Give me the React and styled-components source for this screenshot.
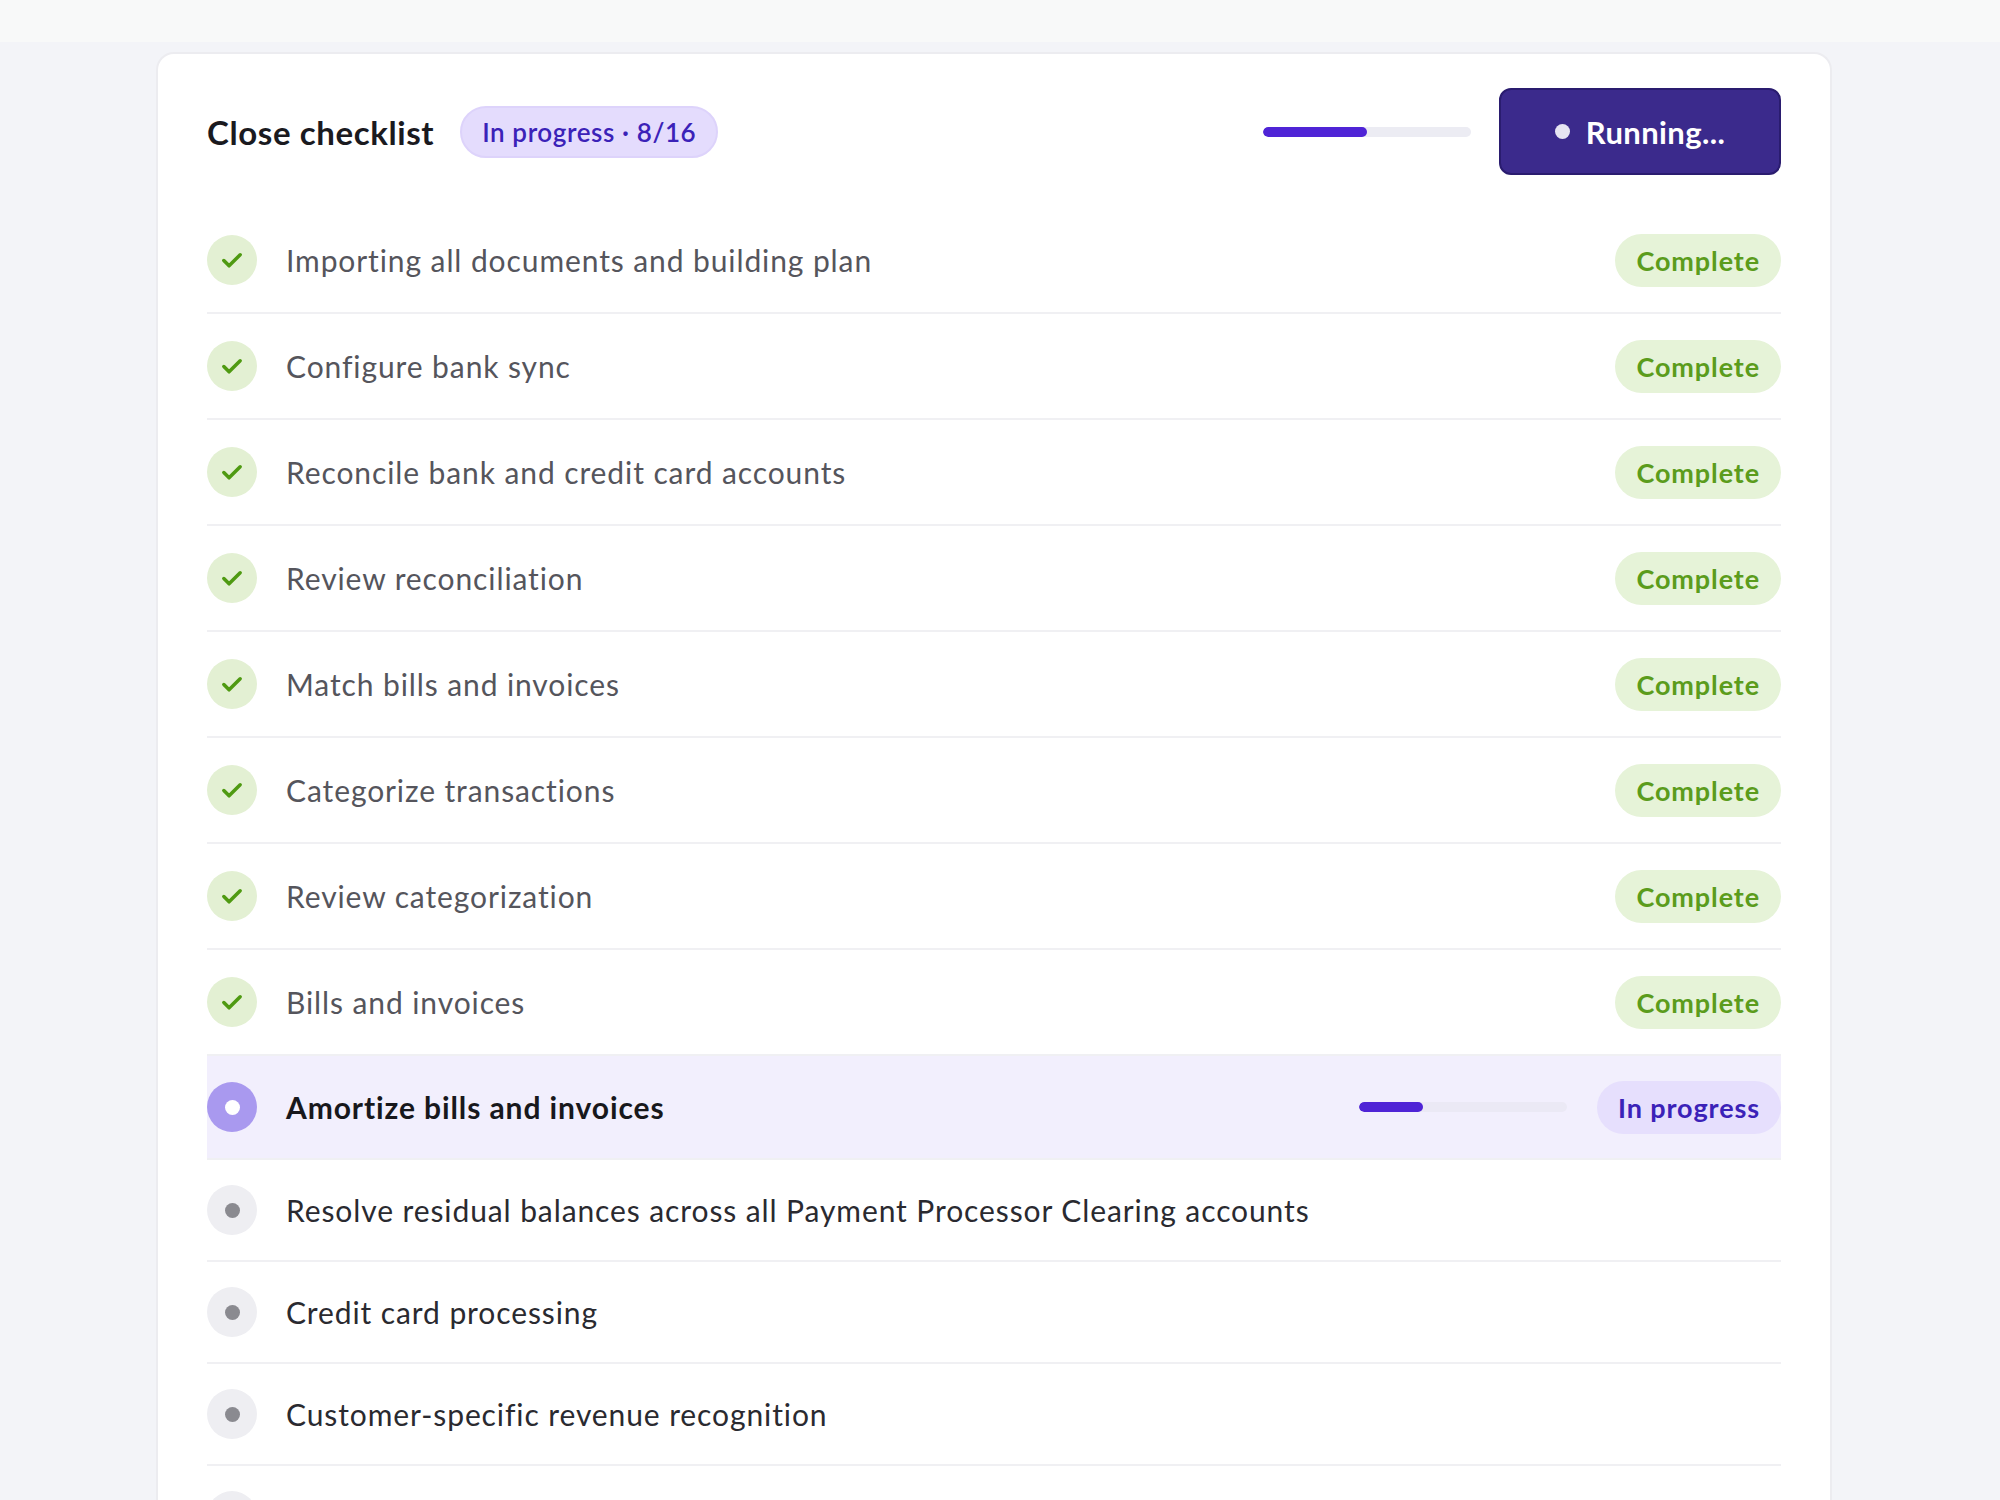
import React from "react";
import styled, { createGlobalStyle } from "styled-components";

const Global = createGlobalStyle`
  *, *::before, *::after { box-sizing: border-box; }
  html, body { margin: 0; padding: 0; background: #f3f4f8; font-family: Lato, "Noto Sans", sans-serif; }
`;

const TopBar = styled.div`height: 42px; background: #f8f9f9;`;
const Page = styled.div`padding: 10px 168px 0 156px;`;
const Card = styled.div`
  background: #fff; border: 2px solid #ececf0; border-bottom: none;
  border-radius: 18px 18px 0 0; padding: 34px 49px 0 49px; min-height: 1500px;
`;
const Header = styled.div`display: flex; align-items: center; margin-bottom: 33px;`;
const Title = styled.h1`margin: 0; font-size: 33px; font-weight: 700; color: #1a1a1f; letter-spacing: 0.6px;`;
const Badge = styled.span`
  margin-left: 26px; height: 52px; padding: 0 20px; border-radius: 26px; display: inline-flex; align-items: center;
  background: #e4dcfd; color: #3b22b8; font-size: 26px; font-weight: 600; border: 2px solid #ddd3fb; letter-spacing: 0.6px;
`;
const Spacer = styled.div`flex: 1;`;
const Track = styled.div`
  width: ${p => p.$w}px; height: 10px; border-radius: 5px; background: ${p => p.$bg || "#ececf3"}; overflow: hidden; display: flex;
`;
const Fill = styled.div`height: 100%; background: #4f24d6; border-radius: 5px;`;
const Button = styled.button`
  margin-left: 28px; width: 282px; height: 87px; border-radius: 12px; border: 2px solid #2a1c6f;
  background: #3b2a8c; color: #fff; font-family: inherit; font-size: 31px; font-weight: 700; letter-spacing: 0.4px;
  display: flex; align-items: center; justify-content: center; gap: 16px;
`;
const Dot = styled.span`width: 15px; height: 15px; border-radius: 50%; background: ${p => p.$c};`;

const Row = styled.div`
  display: flex; align-items: center; height: ${p => p.$h}px; border-bottom: 2px solid #f0f0f3;
  background: ${p => (p.$active ? "#f2effd" : "transparent")};
`;
const Icon = styled.div`
  width: 50px; height: 50px; border-radius: 50%; flex: none; display: flex; align-items: center; justify-content: center;
  background: ${p => p.$bg};
`;
const Label = styled.div`
  margin-left: 29px; font-size: 30px; color: ${p => (p.$active ? "#18181c" : p.$pending ? "#2a2a30" : "#55555c")};
  font-weight: ${p => (p.$active ? 700 : 400)}; flex: 1; letter-spacing: 0.9px; white-space: nowrap;
`;
const Pill = styled.span`
  height: 53px; padding: 0 21px; border-radius: 27px; display: inline-flex; align-items: center; font-size: 27px; font-weight: 700;
  background: ${p => (p.$done ? "#e6f3d8" : "#e6dffd")}; color: ${p => (p.$done ? "#5b9c1c" : "#3b22b8")};
  margin-left: 30px; letter-spacing: 0.9px;
`;

const done = [
  "Importing all documents and building plan",
  "Configure bank sync",
  "Reconcile bank and credit card accounts",
  "Review reconciliation",
  "Match bills and invoices",
  "Categorize transactions",
  "Review categorization",
  "Bills and invoices",
];
const pending = [
  "Resolve residual balances across all Payment Processor Clearing accounts",
  "Credit card processing",
  "Customer-specific revenue recognition",
  "Prepaid expenses",
];

const Check = () => (
  <svg width="28" height="28" viewBox="0 0 24 24" fill="none" stroke="#4f9a12" strokeWidth="3" strokeLinecap="round" strokeLinejoin="round">
    <path d="M5 12.5l4.5 4.5L19 7.5" />
  </svg>
);

export default function App() {
  return (
    <>
      <Global />
      <TopBar />
      <Page>
        <Card>
          <Header>
            <Title>Close checklist</Title>
            <Badge>In progress · 8/16</Badge>
            <Spacer />
            <Track $w={208}><Fill style={{ width: "50%" }} /></Track>
            <Button><Dot $c="#e6e4f2" />Running...</Button>
          </Header>
          {done.map(t => (
            <Row key={t} $h={106}>
              <Icon $bg="#e3f0d3"><Check /></Icon>
              <Label>{t}</Label>
              <Pill $done>Complete</Pill>
            </Row>
          ))}
          <Row $h={104} $active>
            <Icon $bg="#a999ef"><Dot $c="#fff" /></Icon>
            <Label $active>Amortize bills and invoices</Label>
            <Track $w={208} $bg="#ebe9f5"><Fill style={{ width: "31%" }} /></Track>
            <Pill>In progress</Pill>
          </Row>
          {pending.map(t => (
            <Row key={t} $h={102}>
              <Icon $bg="#eeeef2"><Dot $c="#8a8a90" /></Icon>
              <Label $pending>{t}</Label>
            </Row>
          ))}
        </Card>
      </Page>
    </>
  );
}
